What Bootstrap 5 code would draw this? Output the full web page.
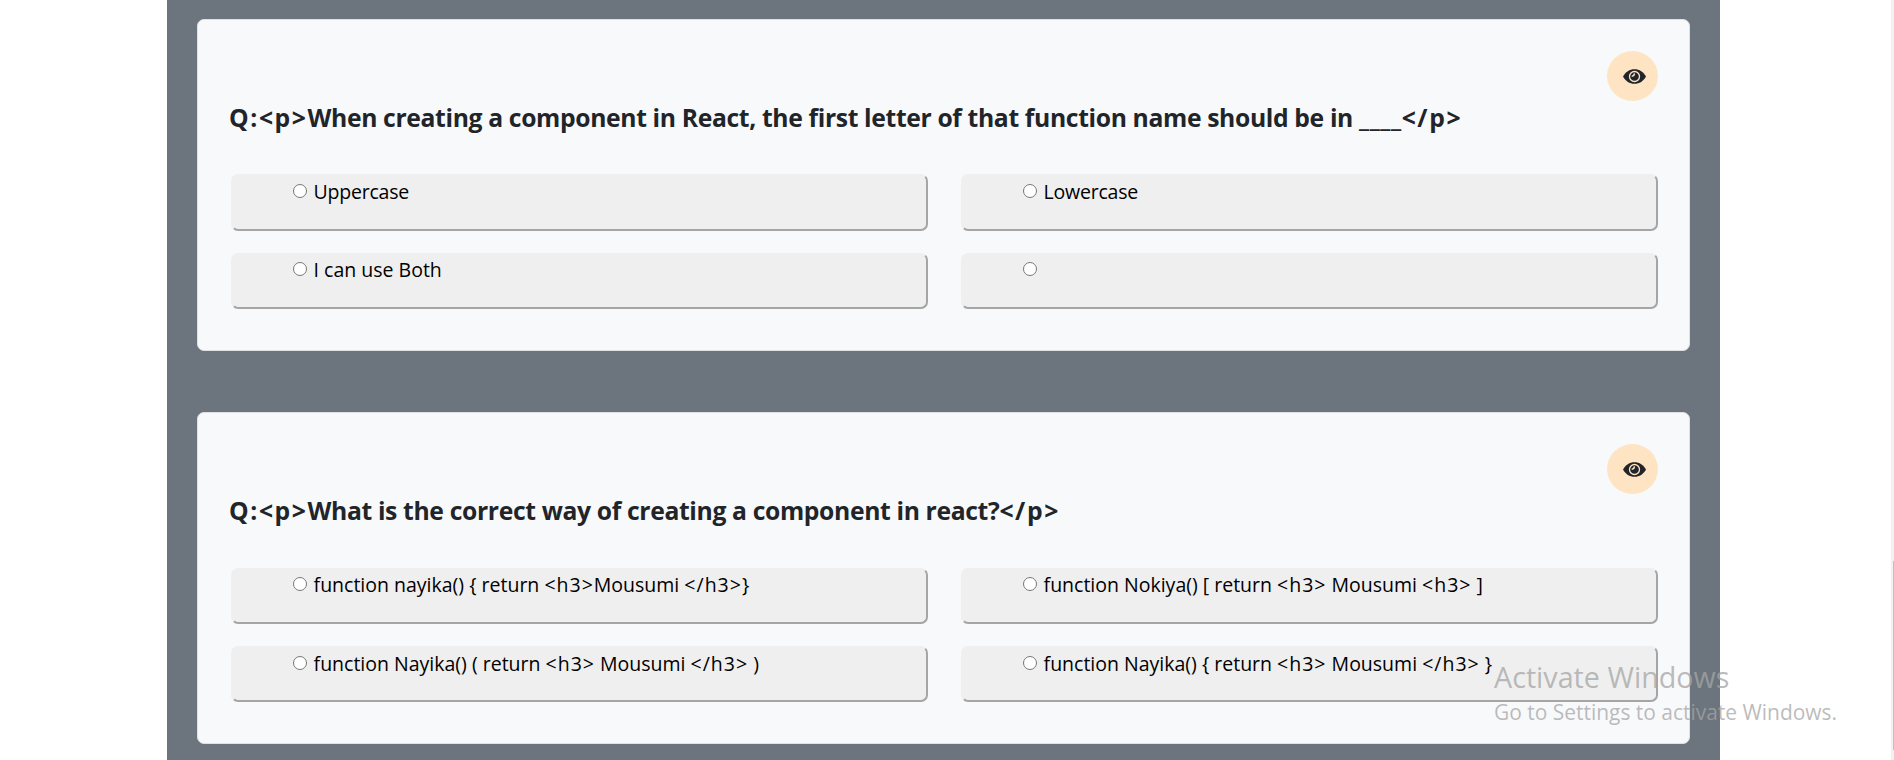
<!DOCTYPE html>
<html lang="en">
<head>
<meta charset="utf-8">
<meta name="viewport" content="width=device-width, initial-scale=1">
<title>Quiz</title>
<link href="https://cdn.jsdelivr.net/npm/bootstrap@5.3.0/dist/css/bootstrap.min.css" rel="stylesheet">
<style>
body{font-family:"Open Sans","Noto Sans",sans-serif;height:760px;overflow:hidden;position:relative}
.quiz{width:1553px;height:760px;margin-left:167px;padding:19px 30px 0;overflow:hidden;background:#6c757d}
.question{height:332px;margin-bottom:61px;padding:31px 31px 0 32px;background:#f8f9fb;border:1px solid #dee2e6;border-radius:7px}
.eye{width:51px;height:50px;background:#ffe4c4;padding-left:4px}
.title{font-size:24.7px;line-height:34px;font-weight:700;margin:0 0 39px -1px;white-space:pre;color:#212529;letter-spacing:-.35px}
.title i{font-style:normal;letter-spacing:1.6px}
.title .blank{letter-spacing:.5px}
.options{display:grid;grid-template-columns:697px 697px;column-gap:33px;row-gap:22px;grid-auto-rows:57px 56px;margin-left:1px}
.question + .question .title{margin-bottom:40px}
.question + .question .options{grid-auto-rows:56px}
.option{background:#efefef;border:2px solid #efefef;border-right-color:#a5a5a5;border-bottom-color:#a5a5a5;border-radius:7px;padding:0 0 0 60px;color:#000;font-size:19.5px;line-height:32px;white-space:pre}
.option input{width:14px;height:14px;margin:8px 6.600px 0 0}
.option i{font-style:normal;letter-spacing:1px}
.option .word{letter-spacing:-.22px}
.option.snug{line-height:30px}
.option.snug input{margin-top:7px}
.watermark{position:absolute;left:1494px;top:657px;color:rgba(165,165,165,.75);white-space:pre}
.wm-big{font-size:28.7px;line-height:40px}
.wm-small{font-size:20.95px;line-height:30px}
.scroll-track{position:absolute;right:0;top:0;width:3px;height:760px;background:#f1f1f1}
.scroll-thumb{position:absolute;right:0;top:561px;width:1px;height:189px;background:#c1c1c1}
</style>
</head>
<body class="bg-white">
<main class="quiz">
  <section class="question">
    <div class="d-flex justify-content-end"><span class="eye rounded-circle d-flex align-items-center justify-content-center"><svg width="23" height="15" viewBox="0 0 23 15"><path fill="#212529" d="M0 7.5C2.5 2.8 6.5.2 11.5.2S20.5 2.8 23 7.5C20.5 12.2 16.5 14.8 11.5 14.8S2.5 12.2 0 7.5Z"/><circle cx="11.5" cy="7.500" r="5" fill="#212529" stroke="#ffe4c4" stroke-width="1.300"/><path d="M8.700 7.300a2.800 2.800 0 0 0 2.600-2.900" fill="none" stroke="#ffe4c4" stroke-width="1.500"/></svg></span></div>
    <h2 class="title"><i>Q:&lt;p&gt;</i><span>When creating a component in React, the first letter of that function name should be in </span><span class="blank">____</span><i>&lt;/p&gt;</i></h2>
    <div class="options">
      <label class="option d-flex align-items-start"><input type="radio" name="q1"><span class="word">Uppercase</span></label>
      <label class="option d-flex align-items-start"><input type="radio" name="q1"><span class="word">Lowercase</span></label>
      <label class="option snug d-flex align-items-start"><input type="radio" name="q1"><span>I can use Both</span></label>
      <label class="option snug d-flex align-items-start"><input type="radio" name="q1"></label>
    </div>
  </section>
  <section class="question">
    <div class="d-flex justify-content-end"><span class="eye rounded-circle d-flex align-items-center justify-content-center"><svg width="23" height="15" viewBox="0 0 23 15"><path fill="#212529" d="M0 7.5C2.5 2.8 6.5.2 11.5.2S20.5 2.8 23 7.5C20.5 12.2 16.5 14.8 11.5 14.8S2.5 12.2 0 7.5Z"/><circle cx="11.5" cy="7.500" r="5" fill="#212529" stroke="#ffe4c4" stroke-width="1.300"/><path d="M8.700 7.300a2.800 2.800 0 0 0 2.600-2.900" fill="none" stroke="#ffe4c4" stroke-width="1.500"/></svg></span></div>
    <h2 class="title"><i>Q:&lt;p&gt;</i><span>What is the correct way of creating a component in react?</span><i>&lt;/p&gt;</i></h2>
    <div class="options">
      <label class="option snug d-flex align-items-start"><input type="radio" name="q2"><span>function nayika() { return <i>&lt;h3&gt;</i>Mousumi <i>&lt;/h3&gt;</i>}</span></label>
      <label class="option snug d-flex align-items-start"><input type="radio" name="q2"><span>function Nokiya() [ return <i>&lt;h3&gt;</i> Mousumi <i>&lt;h3&gt;</i> ]</span></label>
      <label class="option d-flex align-items-start"><input type="radio" name="q2"><span>function Nayika() ( return <i>&lt;h3&gt;</i> Mousumi <i>&lt;/h3&gt;</i> )</span></label>
      <label class="option d-flex align-items-start"><input type="radio" name="q2"><span>function Nayika() { return <i>&lt;h3&gt;</i> Mousumi <i>&lt;/h3&gt;</i> }</span></label>
    </div>
  </section>
</main>
<div class="watermark"><div class="wm-big">Activate Windows</div><div class="wm-small">Go to Settings to activate Windows.</div></div>
<div class="scroll-track"></div><div class="scroll-thumb"></div>
<script src="https://cdn.jsdelivr.net/npm/bootstrap@5.3.0/dist/js/bootstrap.bundle.min.js"></script>
</body>
</html>
